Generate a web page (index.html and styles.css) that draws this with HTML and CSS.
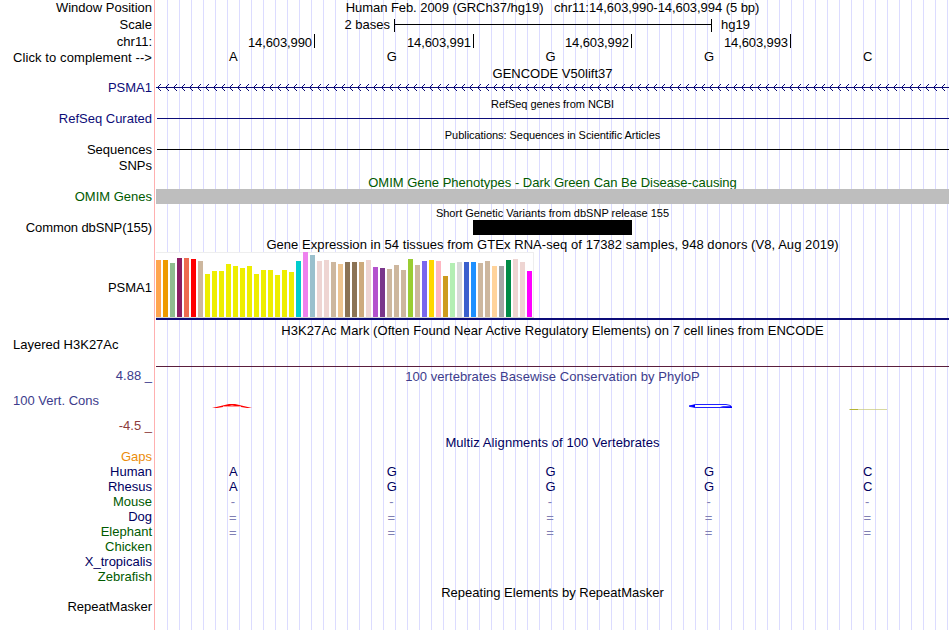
FILE: index.html
```html
<!DOCTYPE html>
<html>
<head>
    <meta charset="utf-8">
    <title>Genome Browser</title>
    <link rel="stylesheet" href="styles.css">
</head>
<body>
    <div class="browser">
        <div class="row h16"><span class="label">Window Position</span><div class="track title position">Human Feb. 2009 (GRCh37/hg19)   chr11:14,603,990-14,603,994 (5 bp)</div></div>
        <div class="row h17"><span class="label">Scale</span>
            <div class="track scale"><span class="bases-size">2 bases</span><span class="ruler"></span><span>hg19</span></div>
        </div>
        <div class="row h17"><span class="label">chr11:</span>
            <div class="track ticks"><span>14,603,990</span><span>14,603,991</span><span>14,603,992</span><span>14,603,993</span></div>
        </div>
        <div class="row h15"><span class="label complement">Click to complement --&gt;</span><div class="track seq up" data-seq="AGGGC"></div></div>

        <div class="row h15"><div class="track title low">GENCODE V50lift37</div></div>
        <div class="row h15"><span class="label navy">PSMA1</span>
            <div class="track">
                <svg class="gene" width="793" height="15" shape-rendering="crispEdges">
                    <defs>
                        <pattern id="arrows" width="8" height="15" patternUnits="userSpaceOnUse">
                            <path d="M1 7h1v1h-1zM2 6h1v1h-1zM2 8h1v1h-1zM3 5h1v1h-1zM3 9h1v1h-1zM4 4h1v1h-1zM4 10h1v1h-1z" fill="#0c0c78"/>
                        </pattern>
                    </defs>
                    <rect width="793" height="15" fill="url(#arrows)"/>
                    <rect y="7" width="793" height="1" fill="#0c0c78"/>
                </svg>
            </div>
        </div>
        <div class="row h16"><div class="track title small low">RefSeq genes from NCBI</div></div>
        <div class="row h15"><span class="label navy">RefSeq Curated</span><div class="track middle"><span class="line navy-line"></span></div></div>
        <div class="row h16"><div class="track title small low">Publications: Sequences in Scientific Articles</div></div>
        <div class="row h15"><span class="label">Sequences</span><div class="track middle"><span class="line"></span></div></div>
        <div class="row h16"><span class="label low">SNPs</span></div>
        <div class="row h16"><div class="track title green lower">OMIM Gene Phenotypes - Dark Green Can Be Disease-causing</div></div>
        <div class="row h15"><span class="label green">OMIM Genes</span><div class="track omim"></div></div>
        <div class="row h16"><div class="track title small dbsnp low">Short Genetic Variants from dbSNP release 155</div></div>
        <div class="row h15"><span class="label common">Common dbSNP(155)</span><div class="track"><div class="snp"></div></div></div>

        <div class="row h17"><div class="track title wide low">Gene Expression in 54 tissues from GTEx RNA-seq of 17382 samples, 948 donors (V8, Aug 2019)</div></div>
        <div class="row h68"><span class="label">PSMA1</span><div class="track gtex"><div class="bars"></div></div></div>

        <div class="row h18"><div class="track title wide lower">H3K27Ac Mark (Often Found Near Active Regulatory Elements) on 7 cell lines from ENCODE</div></div>
        <div class="row h29"><span class="label left">Layered H3K27Ac</span><div class="track h3k"></div></div>

        <div class="row h18"><span class="label blue">4.88 _</span><div class="track title blue wide low">100 vertebrates Basewise Conservation by PhyloP</div></div>
        <div class="row h32"><span class="label left blue">100 Vert. Cons</span>
            <div class="track">
                <svg class="logo" width="793" height="32">
                    <path d="M56 23L73 19H79L96 23H91L76 20.5L61 23Z" fill="#f00"/>
                    <path d="M67 21.5H85" stroke="#f99" stroke-width="1"/>
                    <path d="M533 21L540 19.5H570L574.5 20.5V22.5H540L534 21.5Z" fill="#fff" stroke="#2020ff"/>
                    <path d="M533 21L539 19.5V22.5ZM564 21.2H576V23H571Z" fill="#00f"/>
                    <path d="M693 24.5H731" stroke="#c8c878" stroke-opacity="0.7"/>
                    <path d="M694 24.5H702" stroke="#b4b432"/>
                </svg>
            </div>
        </div>
        <div class="row h17"><span class="label maroon">-4.5 _</span></div>

        <div class="row h15"><div class="track title deep multiz low">Multiz Alignments of 100 Vertebrates</div></div>
        <div class="row h15"><span class="label orange">Gaps</span></div>
        <div class="row h15"><span class="label deep">Human</span><div class="track seq deep" data-seq="AGGGC"></div></div>
        <div class="row h15"><span class="label deep">Rhesus</span><div class="track seq deep" data-seq="AGGGC"></div></div>
        <div class="row h15"><span class="label forest">Mouse</span><div class="track seq pale" data-seq="-----"></div></div>
        <div class="row h15"><span class="label deep">Dog</span><div class="track seq pale low" data-seq="====="></div></div>
        <div class="row h15"><span class="label forest">Elephant</span><div class="track seq pale low" data-seq="====="></div></div>
        <div class="row h15"><span class="label forest">Chicken</span></div>
        <div class="row h15"><span class="label deep">X_tropicalis</span></div>
        <div class="row h15"><span class="label forest">Zebrafish</span></div>

        <div class="row h16"><div class="track title low">Repeating Elements by RepeatMasker</div></div>
        <div class="row h13"><span class="label">RepeatMasker</span></div>
    </div>
    <script>
        // [height, color] for each GTEx tissue
        const tissues = [
            [57, '#ffa54f'], [57, '#ee9a00'], [54, '#8fbc8f'], [59, '#8b1c62'], [59, '#ee6a50'], [58, '#ff0000'],
            [56, '#cdb79e'], [43, '#eeee00'], [46, '#eeee00'], [46, '#eeee00'], [53, '#eeee00'], [51, '#eeee00'],
            [49, '#eeee00'], [51, '#eeee00'], [43, '#eeee00'], [47, '#eeee00'], [47, '#eeee00'], [42, '#eeee00'],
            [47, '#eeee00'], [45, '#eeee00'], [56, '#00cdcd'], [65, '#ee82ee'], [62, '#9ac0cd'], [56, '#eed5d2'],
            [57, '#eed5d2'], [55, '#cdb79e'], [53, '#eec591'], [55, '#8b7355'], [55, '#8b7355'], [55, '#cdaa7d'],
            [57, '#eed5d2'], [50, '#b452cd'], [49, '#7a378b'], [48, '#cdb79e'], [52, '#cdb79e'], [47, '#cdb79e'],
            [58, '#9acd32'], [52, '#cdb79e'], [56, '#7a67ee'], [57, '#ffd700'], [56, '#ffb6c1'], [41, '#cd9b1d'],
            [54, '#b4eeb4'], [55, '#d9d9d9'], [55, '#3a5fcd'], [55, '#1e90ff'], [54, '#cdb79e'], [56, '#cdb79e'],
            [51, '#ffd39b'], [51, '#a6a6a6'], [57, '#008b45'], [58, '#eed5d2'], [55, '#eed5d2'], [46, '#ff00ff']
        ];

        const bars = document.querySelector('.bars');
        tissues.forEach(([height, color]) => {
            const bar = document.createElement('span');
            bar.className = 'bar';
            bar.style.height = height + 'px';
            bar.style.backgroundColor = color;
            bars.appendChild(bar);
        });

        document.querySelectorAll('.seq').forEach(track => {
            for(const base of track.dataset.seq){
                const cell = document.createElement('span');
                cell.textContent = base;
                track.appendChild(cell);
            }
        });
    </script>
</body>
</html>
```
FILE: styles.css
```css
body{
    margin: 0;
    background-color: white;
    color: black;
    font-family: "Liberation Sans", Arial, sans-serif;
    font-size: 13px;
}

.browser{
    height: 630px;
    overflow: hidden;
    background-image:
        linear-gradient(#ffb0b0, #ffb0b0),
        repeating-linear-gradient(to right, #dcdcff 0px, #dcdcff 1px, transparent 1px, transparent 12px);
    background-position: 154px 0, 167px 0;
    background-size: 1px 100%, 782px 100%;
    background-repeat: no-repeat;
}

.row{
    display: grid;
    grid-template-columns: 152px 793px;
    column-gap: 4px;
    white-space: nowrap;
}

.h13{ height: 13px; line-height: 13px; }
.h15{ height: 15px; line-height: 15px; }
.h16{ height: 16px; line-height: 16px; }
.h17{ height: 17px; line-height: 17px; }
.h18{ height: 18px; line-height: 18px; }
.h29{ height: 29px; line-height: 13px; }
.h32{ height: 32px; line-height: 32px; }
.h68{ height: 68px; line-height: 72px; }

.label{
    grid-column: 1;
    text-align: right;
}

.left{
    text-align: left;
    padding-left: 13px;
}

.complement{
    letter-spacing: 0.09px;
}

.common{
    letter-spacing: -0.1px;
}

.track{
    grid-column: 2;
    box-sizing: border-box;
    height: inherit;
}

.title{
    text-align: center;
}

.low{
    padding-top: 1px;
}

.lower{
    padding-top: 2px;
}

.position{
    white-space: pre;
    letter-spacing: -0.06px;
}

.wide{
    letter-spacing: 0.055px;
}

.multiz{
    letter-spacing: 0.09px;
}

.small{
    font-size: 11px;
    letter-spacing: -0.05px;
}

.dbsnp{
    letter-spacing: 0;
}

.scale{
    display: flex;
}

.bases-size{
    width: 234px;
    margin-right: 4px;
    text-align: right;
}

.ruler{
    width: 316px;
    height: 13px;
    margin: 3px 9px 0 0;
    border: solid black;
    border-width: 0 1px;
    background: linear-gradient(black, black) 0 5px / 100% 1px no-repeat;
}

.ticks{
    display: grid;
    grid-template-columns: 159px 159px 158px 159px;
    letter-spacing: -0.1px;
}

.ticks span{
    height: 14px;
    margin-top: 1px;
    padding-right: 2px;
    border-right: 1px solid black;
    text-align: right;
    line-height: 17px;
}

.seq{
    display: grid;
    grid-template-columns: repeat(5, 1fr);
    text-align: center;
}

.seq span{
    padding-right: 4px;
}

.up{
    line-height: 13px;
}

.middle{
    display: flex;
    align-items: center;
}

.line{
    flex: 1;
    height: 1px;
    margin-left: 1px;
    background-color: black;
}

.navy-line{
    background-color: #0c0c78;
}

.gene, .logo{
    display: block;
}

.omim{
    background-color: #bebebe;
}

.snp{
    width: 159px;
    height: 15px;
    margin-left: 317px;
    background-color: black;
}

.gtex{
    border-bottom: 2px solid #0c0c78;
}

.bars{
    box-sizing: border-box;
    display: flex;
    align-items: flex-end;
    gap: 2px;
    width: 378px;
    height: 66px;
    background-color: white;
    box-shadow: inset -1px 1px #eeeeee;
    border-bottom: 1px solid #d3d3d3;
}

.bar{
    width: 5px;
}

.h3k{
    border-bottom: 1px solid #5a1e3c;
}

.navy{ color: #0c0c78; }
.deep{ color: #00005f; }
.green{ color: #005a00; }
.forest{ color: #005a00; }
.blue{ color: #3c3c8c; }
.maroon{ color: #8c3c3c; }
.orange{ color: #eb8c0a; }
.pale{ color: #8080b4; }

.pale span{
    padding-right: 5px;
}
```
